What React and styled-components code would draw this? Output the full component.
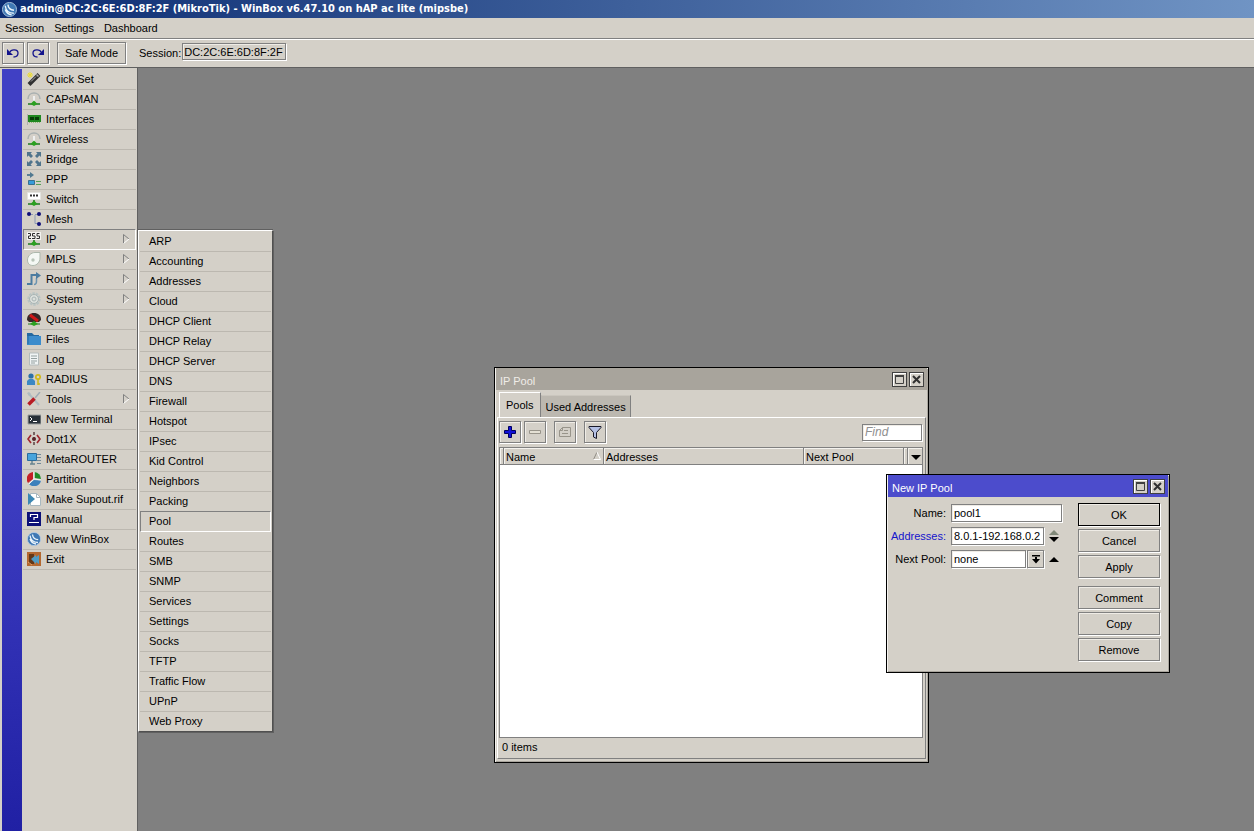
import React, { useState } from 'react'
import styled, { createGlobalStyle, css } from 'styled-components'

const face = '#d4d0c8'
const shade = '#808080'

const GlobalStyle = createGlobalStyle`
  * {
    box-sizing: border-box;
  }
  body {
    margin: 0;
    background: ${face};
  }
  body,
  button,
  input,
  select {
    font: 11px/14px 'Liberation Sans', Arial, sans-serif;
    color: #000;
  }
`

const bevel = css`
  border: 1px solid ${shade};
  box-shadow: 1px 1px 0 #fff, inset 1px 1px 0 #efece6;
`

const Screen = styled.div`
  display: flex;
  flex-direction: column;
  height: 100vh;
  overflow: hidden;
`

const AppTitle = styled.header`
  display: flex;
  align-items: center;
  gap: 3px;
  height: 18px;
  padding-left: 2px;
  flex: none;
  background: linear-gradient(90deg, #0c2c72, #7094c4);
  h1 {
    margin: 0;
    color: #fff;
    font: bold 11px/16px 'DejaVu Sans Condensed', 'Noto Sans', sans-serif;
    white-space: nowrap;
  }
`

const MenuBar = styled.nav`
  display: flex;
  align-items: center;
  gap: 10px;
  height: 21px;
  padding: 0 5px;
  flex: none;
  border-bottom: 1px solid ${shade};
  a {
    color: #000;
    text-decoration: none;
  }
`

const Toolbar = styled.div`
  display: flex;
  align-items: center;
  height: 29px;
  padding: 0 2px 2px;
  flex: none;
  border-top: 1px solid #fff;
  border-bottom: 1px solid #606060;
  label {
    margin: 0 1px 0 13px;
  }
`

const ToolButton = styled.button`
  ${bevel};
  display: flex;
  align-items: center;
  justify-content: center;
  flex: none;
  width: ${({ $wide }) => ($wide ? '69px' : '22px')};
  height: 22px;
  margin-right: ${({ $gap }) => $gap || 0}px;
  padding: 0;
  background: ${face};
`

const SessionField = styled.input`
  ${bevel};
  width: 104px;
  height: 17px;
  margin-bottom: 2px;
  padding: 0 1px;
  background: ${face};
`

const Body = styled.div`
  display: flex;
  flex: 1;
  min-height: 0;
`

const Sidebar = styled.aside`
  display: flex;
  flex: none;
  width: 138px;
  padding: 1px 1px 0 2px;
  border-right: 1px solid #606060;
`

const Stripe = styled.div`
  width: 20px;
  margin-right: 1px;
  background: linear-gradient(#4040c4 50%, #2020a4);
`

const MainMenu = styled.ul`
  flex: 1;
  margin: 0;
  padding: 1px 0 0;
  list-style: none;
`

const sunken = css`
  height: 21px;
  margin-top: -1px;
  border: 1px solid;
  border-color: ${shade} #fff #fff ${shade};
`

const MainItem = styled.li`
  position: relative;
  display: flex;
  align-items: center;
  height: 20px;
  padding: 0 6px 2px 4px;
  border-bottom: 1px solid #bcb8b0;
  ${({ $open }) => $open && sunken};
  ${({ $open }) => $open && 'padding: 0 5px 1px 3px;'};
  > svg:first-child {
    flex: none;
    margin-right: 5px;
  }
  > svg + span {
    flex: 1;
    white-space: nowrap;
  }
`

const SubMenu = styled.ul`
  position: absolute;
  z-index: 2;
  top: 0;
  left: 114px;
  width: 135px;
  margin: 0;
  padding: 1px 1px 0;
  list-style: none;
  background: ${face};
  border: 1px solid;
  border-color: #fff #505050 #505050 #fff;
  box-shadow: 1px 1px 0 #606060, 0 -1px 0 #606060;
`

const SubItem = styled.li`
  height: 20px;
  padding: 2px 0 0 9px;
  border-bottom: 1px solid #bcb8b0;
  ${({ $active }) => $active && sunken};
  ${({ $active }) => $active && 'padding-left: 8px;'};
  &:last-child {
    height: 19px;
    border-bottom: 0;
  }
`

const Desktop = styled.main`
  position: relative;
  flex: 1;
  background: ${shade};
`

const Frame = styled.section`
  position: absolute;
  display: flex;
  flex-direction: column;
  left: ${({ $x }) => $x}px;
  top: ${({ $y }) => $y}px;
  width: ${({ $w }) => $w}px;
  height: ${({ $h }) => $h}px;
  background: ${face};
  border: 1px solid #000;
  box-shadow: inset 1px 1px 0 #f4f2ee, inset -1px -1px 0 #aaa69e;
`

const FrameTitle = styled.div`
  display: flex;
  align-items: center;
  gap: 2px;
  flex: none;
  height: 22px;
  margin: 0 1px;
  padding: 1px 3px 0 4px;
  color: ${({ $active }) => ($active ? '#fff' : '#f0ede8')};
  background: ${({ $active }) => ($active ? '#4c4ccc' : '#a8a49c')};
  h2 {
    flex: 1;
    margin: 0;
    padding-top: 2px;
    font: inherit;
  }
`

const CaptionButton = styled.button`
  display: flex;
  align-items: center;
  justify-content: center;
  width: 15px;
  height: 15px;
  padding: 0;
  background: ${face};
  border: 1px solid #404040;
  box-shadow: inset 1px 1px 0 #fff;
`

const Tabs = styled.div`
  display: flex;
  align-items: flex-end;
  height: 27px;
  padding-left: 4px;
  flex: none;
`

const Tab = styled.button`
  height: ${({ $active }) => ($active ? 25 : 22)}px;
  padding: ${({ $active }) => ($active ? '0 6px' : '0 4px')};
  background: ${({ $active }) => ($active ? face : '#bcb8b0')};
  border: 1px solid;
  border-color: #fff ${shade} transparent #fff;
  border-bottom: 0;
  ${({ $active }) => !$active && 'border-color: #cac6be #808080 transparent #bcb8b0;'};
`

const Panel = styled.div`
  display: flex;
  flex-direction: column;
  flex: 1;
  min-height: 0;
  margin: 0 2px 3px 2px;
  padding: 3px 2px 0 1px;
  border: 1px solid;
  border-color: #fff ${shade} ${shade} #fff;
`

const PanelTools = styled.div`
  display: flex;
  align-items: center;
  height: 22px;
  margin: 0 1px 4px 0;
  flex: none;
`

const Find = styled.input`
  ${bevel};
  width: 60px;
  height: 17px;
  margin-left: auto;
  padding: 0 2px;
  background: #fff;
  &::placeholder {
    color: #909090;
    font-style: italic;
    font-size: 12px;
    opacity: 1;
  }
`

const Listing = styled.div`
  flex: 1;
  min-height: 0;
  background: #fff;
  border: 1px solid ${shade};
`

const Table = styled.table`
  width: 100%;
  table-layout: fixed;
  border-collapse: separate;
  border-spacing: 0;
  th {
    height: 17px;
    padding: 2px 0 0 2px;
    line-height: 14px;
    text-align: left;
    font-weight: normal;
    background: ${face};
    border-right: 1px solid ${shade};
    border-bottom: 1px solid ${shade};
    box-shadow: inset 1px 1px 0 #f4f2ee;
  }
  th:last-child {
    border-right: 0;
  }
  th > svg {
    float: right;
    margin: 1px 2px 0 0;
  }
`

const Arrow = styled.div`
  display: flex;
  justify-content: center;
  padding-right: 1px;
`

const Status = styled.footer`
  height: 20px;
  padding: 2px 3px;
  flex: none;
`

const DialogBody = styled.form`
  display: flex;
  justify-content: space-between;
  padding: 6px 9px 0 4px;
`

const Fields = styled.div`
  display: grid;
  grid-template-columns: 55px 93px 12px;
  grid-auto-rows: 18px;
  gap: 5px;
  padding-top: 1px;
  align-items: center;
  align-content: start;
`

const Label = styled.label`
  text-align: right;
  white-space: nowrap;
  color: ${({ $changed }) => ($changed ? '#1414cc' : '#000')};
`

const TextField = styled.input`
  ${bevel};
  width: 100%;
  height: 18px;
  padding: 0 2px;
  background: #fff;
  ${({ $span }) => $span && 'width: 111px; grid-column: span 2;'};
`

const Combo = styled.div`
  display: flex;
  gap: 1px;
  select {
    ${bevel};
    flex: 1;
    height: 18px;
    padding: 0 2px;
    appearance: none;
    border-radius: 0;
    background: #fff;
  }
`

const ComboButton = styled(ToolButton)`
  width: 17px;
  height: 18px;
`

const Spin = styled.button`
  display: flex;
  width: 11px;
  height: 12px;
  padding: 0;
  align-items: center;
  border: 0;
  background: none;
`

const Actions = styled.div`
  display: flex;
  flex-direction: column;
  gap: 3px;
`

const Action = styled.button`
  ${bevel};
  width: 82px;
  height: 23px;
  padding: 0;
  background: ${face};
  border-color: ${({ $primary }) => ($primary ? '#000' : shade)};
  &:nth-child(4) {
    margin-top: 5px;
  }
`

const Glyph = ({ children, size = 14, ...rest }) => (
  <svg width={size} height={size} viewBox="0 0 14 14" fill="none" aria-hidden="true" {...rest}>
    {children}
  </svg>
)

const globe = (
  <>
    <circle cx="7" cy="7" r="6.6" fill="#3f78b4" stroke="#b4cce4" strokeWidth=".8" />
    <path d="M3 3.5c.5 4 3 7 8 7M5.5 2.5c.3 3 2 5 5.7 5.2M3 7c.8 2.500 3 4.500 6 5" stroke="#eaf4fc" strokeWidth="1.300" />
  </>
)

const antenna = (
  <>
    <path d="M1 7C1 3 4 1 7 1s6 2 6 6" stroke="#a8b0b0" strokeWidth="1.500" />
    <path d="M7 4v7" stroke="#eef0f0" strokeWidth="2" />
    <path d="M1 12h12" stroke="#207820" strokeWidth="1.500" />
    <path d="M3.500 12L7 8.500l3.500 3.500L7 14z" fill="#2ca020" />
  </>
)

const greenPlug = (
  <>
    <path d="M7 8v3M1 12h12" stroke="#207820" strokeWidth="1.500" />
    <path d="M3.500 12L7 8.500l3.500 3.500L7 14z" fill="#2ca020" />
  </>
)

const icons = {
  'Quick Set': (
    <>
      <path d="M2 12.500L12 2.500" stroke="#303030" strokeWidth="4" />
      <path d="M9.500 2.500l2 2" stroke="#b0b0b0" strokeWidth="1.500" />
      <path d="M4 9.500l5-5" stroke="#a8a8a8" />
      <path d="M3 0v6M0 3h6M1 1l4 4M5 1L1 5" stroke="#ecdc30" />
    </>
  ),
  CAPsMAN: antenna,
  Wireless: antenna,
  Interfaces: (
    <>
      <path d="M.5 2v11" stroke="#b0b0b0" />
      <path d="M1 3h13v7H1z" fill="#208820" />
      <path d="M3 5h4v3H3zM8 5h4v3H8z" fill="#083c08" />
      <path d="M2 10.500h11" stroke="#94b878" strokeDasharray="1 1" />
    </>
  ),
  Bridge: (
    <path
      d="M0 0h5L3.600 1.500 6 4 4 6 1.500 3.600 0 5zM14 0v5l-1.500-1.400L10 6 8 4l2.400-2.500L9 0zM0 14V9l1.500 1.400L4 8l2 2-2.400 2.500L5 14zM14 14H9l1.400-1.500L8 10l2-2 2.500 2.400L14 9z"
      fill="#50748c"
    />
  ),
  PPP: (
    <>
      <path d="M0 3h3" stroke="#507890" strokeWidth="1.800" />
      <path d="M3 0l4 3-4 3z" fill="#507890" />
      <path d="M1.500 8.500h6v4h-6z" fill="#389cdc" stroke="#387090" />
      <path d="M9 9.500h5M9 12.500h5" stroke="#58a058" />
    </>
  ),
  Switch: (
    <>
      <path d="M.5.5h13v7H.5z" fill="#fff" stroke="#e4e4e0" />
      <path d="M3 3.500h2M6 3.500h2M9 3.500h2" stroke="#303030" strokeWidth="1.800" />
      {greenPlug}
    </>
  ),
  Mesh: (
    <>
      <path d="M3 2.500h3M8 3v8.500h3M8 2.500h3" stroke="#8c98b4" />
      <circle cx="2" cy="2" r="2" fill="#101078" />
      <circle cx="12" cy="2" r="2" fill="#101078" />
      <circle cx="12" cy="12" r="2" fill="#101078" />
    </>
  ),
  IP: (
    <>
      <path d="M0 0h14v8H0z" fill="#f4f4f0" />
      <path
        d="M1 1.500h2.500v2.500H1.500v2.500H4M8 1.500H5.500V4H8v2.500H5M12.500 1.500H10V4h2.500v2.500H9.500"
        stroke="#303030"
      />
      {greenPlug}
    </>
  ),
  MPLS: (
    <>
      <path d="M.5 8C.5 4 4 .5 8 .5h5V6c0 4-3 7.500-7 7.500S.5 11 .5 8z" fill="#f4f8f4" stroke="#acb8ac" />
      <circle cx="6" cy="8" r="1.700" fill="#b8c4b8" />
    </>
  ),
  Routing: (
    <>
      <path d="M0 12h4.500V3H10" stroke="#4c7ca0" strokeWidth="2" />
      <path d="M7 12.500c3 0 2.500-3 2.500-6.500" stroke="#6c94b0" strokeWidth="1.500" />
      <path d="M9 0l5 3.500L9 7z" fill="#4c7ca0" />
    </>
  ),
  System: (
    <>
      <circle cx="7" cy="7" r="5.700" stroke="#b8c4c4" strokeWidth="2" strokeDasharray="2.500 1" />
      <circle cx="7" cy="7" r="4.500" fill="#dce0dc" stroke="#a8b4b4" />
      <circle cx="7" cy="7" r="2" stroke="#a8b4b4" />
    </>
  ),
  Queues: (
    <>
      <path d="M0 8C0 3 3 1 7 1s7 2 7 7l-2 2H2z" fill="#382828" />
      <path d="M3 3l8 6" stroke="#d01818" strokeWidth="3" />
      <path d="M1 12h12" stroke="#207820" />
      <path d="M3 12l4-3 4 3-4 2z" fill="#2ca020" />
    </>
  ),
  Files: (
    <>
      <path d="M0 1h5l2 2h5v3H0z" fill="#2468a0" />
      <path d="M0 4h14v9H0z" fill="#3c8ccc" />
      <path d="M1 2v10" stroke="#2468a0" />
    </>
  ),
  Log: (
    <>
      <path d="M2.500 1h9v12h-9z" fill="#f0f4f4" stroke="#b4bcbc" />
      <path d="M4 4h6M4 6.500h6M4 9h6M4 11h4" stroke="#94a0a0" />
    </>
  ),
  RADIUS: (
    <>
      <circle cx="4" cy="4" r="2.600" fill="#2c70a8" />
      <path d="M0 13V9l2-2h4l2 2v4z" fill="#3c88c4" />
      <circle cx="11" cy="5" r="2.200" stroke="#d0b818" strokeWidth="1.700" />
      <path d="M11 7v6M11 12h2" stroke="#d0b818" strokeWidth="1.500" />
    </>
  ),
  Tools: (
    <>
      <path d="M2 2l10 11" stroke="#b0bcc0" strokeWidth="2" />
      <path d="M0 1l2 3 2-2-2-2" fill="#b0bcc0" />
      <path d="M8 6l5-6" stroke="#a0acb4" strokeWidth="1.500" />
      <path d="M1.500 12.500l6-6" stroke="#b81c24" strokeWidth="3.500" />
    </>
  ),
  'New Terminal': (
    <>
      <path d="M1 3h13v9H1z" fill="#283038" stroke="#9ca0a0" />
      <path d="M3 5l2 2-2 2M6 9.500h4" stroke="#fff" />
    </>
  ),
  Dot1X: (
    <>
      <path d="M4 3L1 7l3 4M10 3l3 4-3 4" stroke="#a02830" strokeWidth="1.700" />
      <path d="M7 0v14" stroke="#584040" strokeDasharray="3 2" strokeWidth="1.500" />
      <circle cx="7" cy="7" r="2" fill="#582428" />
    </>
  ),
  MetaROUTER: (
    <>
      <path d="M.5 1.500h9v7h-9z" fill="#48a4dc" stroke="#2c6c9c" />
      <path d="M3 12h5M5 9v3" stroke="#688490" strokeWidth="1.500" />
      <path d="M10 2.500h4M10 5.500h4M10 8.500h4M10 11.500h4" stroke="#708898" />
    </>
  ),
  Partition: (
    <>
      <path d="M6 7V0a7 7 0 0 0-5 11z" fill="#c42028" />
      <path d="M7.500 6V0A7 7 0 0 1 14 7z" fill="#208c28" />
      <path d="M7 8l7 .5A7 7 0 0 1 2 12z" fill="#3c80bc" />
      <path d="M7 0v7l7 1M7 7l-5 5" stroke="#f0f0f0" />
    </>
  ),
  'Make Supout.rif': (
    <>
      <path d="M3.500 1.500h6l4 4v8h-10z" fill="#fff" stroke="#a8b8c0" />
      <path d="M9.500 1.500v4h4" stroke="#a8b8c0" />
      <path d="M1 1l7 6-7 6z" fill="#3c88b4" />
    </>
  ),
  Manual: (
    <>
      <path d="M0 0h14v14H0z" fill="#0c1078" />
      <path d="M3.500 5V2.500h7v3H7V8M2 10.500h10" stroke="#fff" strokeWidth="1.200" />
    </>
  ),
  'New WinBox': globe,
  Exit: (
    <>
      <path d="M0 0h14v14H0z" fill="#b46830" />
      <path d="M2 2h5v10H2z" fill="#643818" />
      <path d="M4 7l5-4v2l3-2v9l-3-2v2z" fill="#509cc4" />
      <path d="M1 10l4 3" stroke="#e8a060" />
    </>
  ),
}

const withArrow = ['IP', 'MPLS', 'Routing', 'System', 'Tools']

const mainMenu = [
  'Quick Set', 'CAPsMAN', 'Interfaces', 'Wireless', 'Bridge', 'PPP', 'Switch', 'Mesh',
  'IP', 'MPLS', 'Routing', 'System', 'Queues', 'Files', 'Log', 'RADIUS', 'Tools',
  'New Terminal', 'Dot1X', 'MetaROUTER', 'Partition', 'Make Supout.rif', 'Manual',
  'New WinBox', 'Exit',
]

const ipMenu = [
  'ARP', 'Accounting', 'Addresses', 'Cloud', 'DHCP Client', 'DHCP Relay', 'DHCP Server',
  'DNS', 'Firewall', 'Hotspot', 'IPsec', 'Kid Control', 'Neighbors', 'Packing', 'Pool',
  'Routes', 'SMB', 'SNMP', 'Services', 'Settings', 'Socks', 'TFTP', 'Traffic Flow',
  'UPnP', 'Web Proxy',
]

const Caption = ({ title, active }) => (
  <FrameTitle $active={active}>
    <h2>{title}</h2>
    <CaptionButton aria-label="Maximize">
      <svg width="9" height="9" viewBox="0 0 9 9" fill="none">
        <path d="M.5 1v7.500h8V1" stroke="#404040" />
        <path d="M0 1h9" stroke="#404040" strokeWidth="2" />
      </svg>
    </CaptionButton>
    <CaptionButton aria-label="Close">
      <svg width="9" height="9" viewBox="0 0 9 9">
        <path d="M1 1l7 7M8 1L1 8" stroke="#303030" strokeWidth="2" />
      </svg>
    </CaptionButton>
  </FrameTitle>
)

const Triangle = ({ down, color = '#000' }) => (
  <svg width="10" height="5" viewBox="0 0 10 5" aria-hidden="true">
    <path d={down ? 'M0 0h10L5 5z' : 'M0 5h10L5 0z'} fill={color} />
  </svg>
)

const undoArrow = (
  <>
    <path d="M1 3v6h6z" fill="#14148c" />
    <path d="M4 6c1-3 8-3 8 1 0 3-2 4-4.500 4" stroke="#14148c" strokeWidth="1.300" />
  </>
)

const PoolList = () => (
  <Frame $x={356} $y={299} $w={435} $h={396}>
    <Caption title="IP Pool" />
    <Tabs role="tablist">
      <Tab role="tab" aria-selected="true" $active>Pools</Tab>
      <Tab role="tab" aria-selected="false">Used Addresses</Tab>
    </Tabs>
    <Panel>
      <PanelTools>
        <ToolButton $gap={3} aria-label="Add">
          <Glyph>
            <path d="M5.500 1.500h3v4h4v3h-4v4h-3v-4h-4v-3h4z" fill="#1010d8" stroke="#000060" />
          </Glyph>
        </ToolButton>
        <ToolButton $gap={8} aria-label="Remove">
          <Glyph>
            <path d="M1.500 5.500h11v3h-11z" fill="#e4e0d4" stroke="#98948a" />
          </Glyph>
        </ToolButton>
        <ToolButton $gap={8} aria-label="Comment">
          <Glyph>
            <path d="M4.500 2.500h8v9h-11v-6zM1.500 5.500h3v-3M6 5.500h4M4 8.500h6" stroke="#98948a" />
          </Glyph>
        </ToolButton>
        <ToolButton aria-label="Filter">
          <Glyph>
            <path d="M1 1.500h12v1L8.500 7.500v6l-3-1.500V7.500L1 2.500z" fill="#b4c0e4" stroke="#181828" />
          </Glyph>
        </ToolButton>
        <Find placeholder="Find" aria-label="Find" />
      </PanelTools>
      <Listing>
        <Table>
          <colgroup>
            <col width="4" />
            <col width="100" />
            <col width="200" />
            <col />
            <col width="4" />
            <col width="14" />
          </colgroup>
          <thead>
            <tr>
              <th />
              <th>
                Name
                <svg width="8" height="9" viewBox="0 0 8 9">
                  <path d="M.5 8.500L4 1" stroke="#908c84" />
                  <path d="M4 1l3.500 7.500H.5" stroke="#fff" fill="none" />
                </svg>
              </th>
              <th>Addresses</th>
              <th>Next Pool</th>
              <th />
              <th aria-label="Columns">
                <Arrow>
                  <Triangle down />
                </Arrow>
              </th>
            </tr>
          </thead>
        </Table>
      </Listing>
      <Status>0 items</Status>
    </Panel>
  </Frame>
)

const PoolDialog = () => {
  const [name, setName] = useState('pool1')
  const [range, setRange] = useState('8.0.1-192.168.0.2')

  return (
    <Frame $x={748} $y={406} $w={284} $h={199}>
      <Caption title="New IP Pool" active />
      <DialogBody onSubmit={e => e.preventDefault()}>
        <Fields>
          <Label htmlFor="name">Name:</Label>
          <TextField id="name" $span value={name} onChange={e => setName(e.target.value)} />
          <Label htmlFor="addresses" $changed>Addresses:</Label>
          <TextField id="addresses" value={range} onChange={e => setRange(e.target.value)} />
          <Spin type="button" aria-label="Add or remove range">
            <svg width="10" height="12" viewBox="0 0 10 12">
              <path d="M0 5h10L5 0z" fill="#808878" />
              <path d="M0 7h10l-5 5z" fill="#000" />
            </svg>
          </Spin>
          <Label htmlFor="next">Next Pool:</Label>
          <Combo>
            <select id="next" defaultValue="none">
              <option>none</option>
            </select>
            <ComboButton type="button" aria-label="Open list">
              <svg width="8" height="9" viewBox="0 0 8 9">
                <path d="M0 0h8v1.500H0zM3 2h2v2h3L4 8.500 0 4h3z" />
              </svg>
            </ComboButton>
          </Combo>
          <Spin type="button" aria-label="Clear">
            <Triangle />
          </Spin>
        </Fields>
        <Actions>
          {['OK', 'Cancel', 'Apply', 'Comment', 'Copy', 'Remove'].map(text => (
            <Action key={text} type="button" $primary={text === 'OK'}>
              {text}
            </Action>
          ))}
        </Actions>
      </DialogBody>
    </Frame>
  )
}

const App = () => (
  <Screen>
    <GlobalStyle />
    <AppTitle>
      <Glyph size={15}>{globe}</Glyph>
      <h1>admin@DC:2C:6E:6D:8F:2F (MikroTik) - WinBox v6.47.10 on hAP ac lite (mipsbe)</h1>
    </AppTitle>
    <MenuBar>
      <a href="#session">Session</a>
      <a href="#settings">Settings</a>
      <a href="#dashboard">Dashboard</a>
    </MenuBar>
    <Toolbar>
      <ToolButton $gap={3} aria-label="Undo">
        <Glyph>{undoArrow}</Glyph>
      </ToolButton>
      <ToolButton $gap={8} aria-label="Redo">
        <Glyph>
          <g transform="matrix(-1 0 0 1 14 0)">{undoArrow}</g>
        </Glyph>
      </ToolButton>
      <ToolButton $wide>Safe Mode</ToolButton>
      <label htmlFor="session">Session:</label>
      <SessionField id="session" readOnly value="DC:2C:6E:6D:8F:2F" />
    </Toolbar>
    <Body>
      <Sidebar>
        <Stripe />
        <MainMenu>
          {mainMenu.map(text => (
            <MainItem key={text} $open={text === 'IP'}>
              <Glyph>{icons[text]}</Glyph>
              <span>{text}</span>
              {withArrow.includes(text) && (
                <svg width="7" height="10" viewBox="0 0 7 10" fill="none">
                  <path d="M.5 9.500v-9L6 5" stroke="#808080" />
                  <path d="M6 5L.5 9.500" stroke="#fff" />
                </svg>
              )}
              {text === 'IP' && (
                <SubMenu>
                  {ipMenu.map(entry => (
                    <SubItem key={entry} $active={entry === 'Pool'}>
                      {entry}
                    </SubItem>
                  ))}
                </SubMenu>
              )}
            </MainItem>
          ))}
        </MainMenu>
      </Sidebar>
      <Desktop>
        <PoolList />
        <PoolDialog />
      </Desktop>
    </Body>
  </Screen>
)

export default App
